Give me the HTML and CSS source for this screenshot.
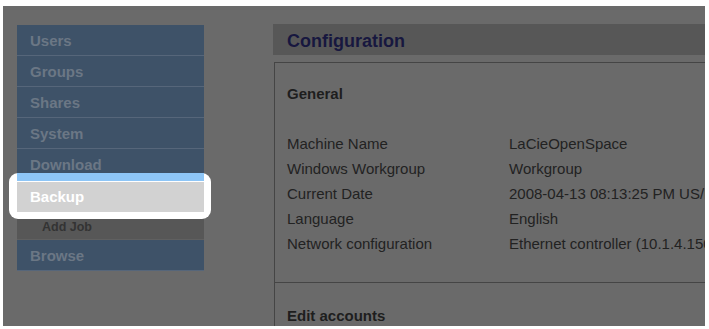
FILE: index.html
```html
<!DOCTYPE html>
<html>
<head>
<meta charset="utf-8">
<link rel="stylesheet" href="styles.css">
</head>
<body>
<div class="frame">
  <nav class="sidebar">
    <div class="nav-item">Users</div>
    <div class="nav-item">Groups</div>
    <div class="nav-item">Shares</div>
    <div class="nav-item">System</div>
    <div class="nav-item">Download</div>
    <div class="highlight">
      <div class="hl-top"></div>
      <div class="hl-item">Backup</div>
    </div>
    <div class="sub-item">Add Job</div>
    <div class="nav-item">Browse</div>
  </nav>
  <main class="main">
    <div class="header">Configuration</div>
    <div class="box">
      <section class="section">
        <h2 class="section-title">General</h2>
        <div class="rows">
          <div class="row"><span class="label">Machine Name</span><span class="value">LaCieOpenSpace</span></div>
          <div class="row"><span class="label">Windows Workgroup</span><span class="value">Workgroup</span></div>
          <div class="row"><span class="label">Current Date</span><span class="value">2008-04-13 08:13:25 PM US/Pacific</span></div>
          <div class="row"><span class="label">Language</span><span class="value">English</span></div>
          <div class="row"><span class="label">Network configuration</span><span class="value">Ethernet controller (10.1.4.150)</span></div>
        </div>
      </section>
      <section class="section section-next">
        <h2 class="section-title">Edit accounts</h2>
      </section>
    </div>
  </main>
</div>
</body>
</html>
```
FILE: styles.css
```css
* { box-sizing: border-box; }
html, body { margin: 0; padding: 0; background: #ffffff; }
body { font-family: "Liberation Sans", Arial, sans-serif; }

.frame {
  margin: 6px 4px 0 3px;
  height: 320px;
  background: #6a6a6a;
  display: flex;
  overflow: hidden;
}

.sidebar {
  width: 201px;
  flex: none;
  padding: 19px 0 0 14px;
}

.nav-item {
  height: 31px;
  background: #3e5268;
  border-bottom: 1px solid #56667a;
  color: #6b7785;
  font-weight: bold;
  font-size: 15px;
  line-height: 31px;
  padding-left: 13px;
}

.highlight {
  position: relative;
  z-index: 1;
  margin: -7px -7px 0 -8px;
  height: 46px;
  background: #ffffff;
  border-radius: 9px;
  padding: 0 7px 0 8px;
}
.hl-top {
  height: 9px;
  background: #8ec6f7;
  border-bottom: 1px solid #ffffff;
}
.hl-item {
  height: 30px;
  background: #d2d2d2;
  color: #ffffff;
  font-weight: bold;
  font-size: 15px;
  line-height: 30px;
  padding-left: 13px;
}

.sub-item {
  height: 21px;
  background: #575757;
  border-bottom: 1px solid #606060;
  color: #333333;
  font-weight: bold;
  font-size: 12.5px;
  line-height: 16px;
  padding-left: 25px;
}

.main {
  flex: 1;
  min-width: 0;
  margin-left: 69px;
  padding-top: 18px;
  white-space: nowrap;
}

.header {
  height: 31px;
  background: #575757;
  color: #17173f;
  font-weight: bold;
  font-size: 18px;
  line-height: 34px;
  padding-left: 14px;
}

.box {
  margin: 7px 0 0 1px;
  border-top: 1px solid #454545;
  border-left: 1px solid #454545;
  height: 400px;
}

.section { padding: 22px 0 0 12px; }
.section-title {
  margin: 0;
  font-size: 15px;
  font-weight: bold;
  color: #1e1e1e;
  line-height: 18px;
}

.rows { margin-top: 28px; padding-bottom: 26px; }
.row {
  display: flex;
  height: 25px;
  line-height: 25px;
  font-size: 15px;
  color: #222222;
}
.label { width: 222px; flex: none; }

.section-next {
  border-top: 1px solid #454545;
  padding-top: 24px;
}
```
